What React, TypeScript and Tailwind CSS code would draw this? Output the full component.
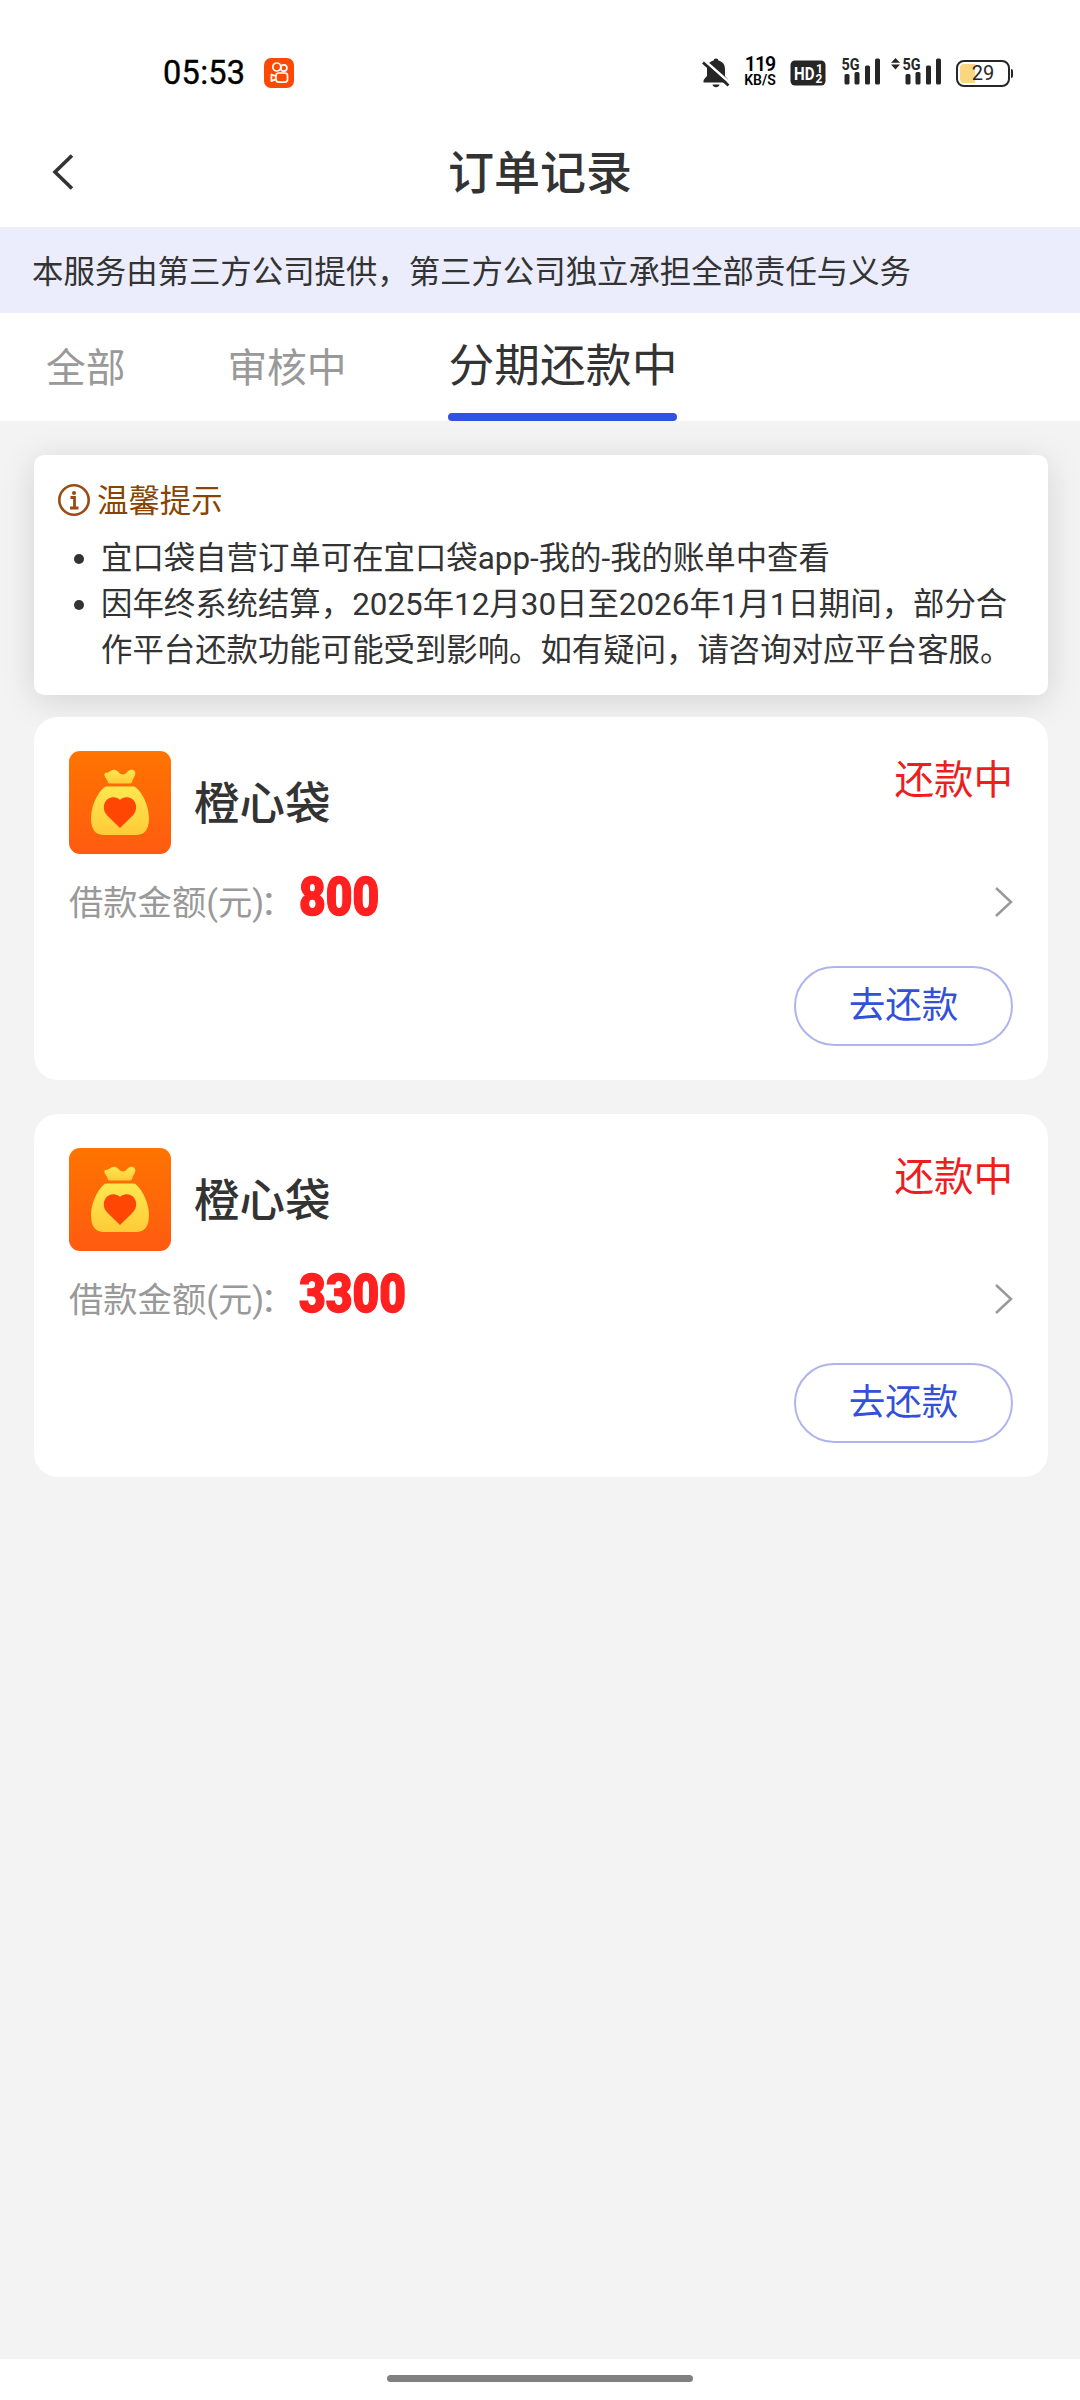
import React from 'react';

interface Order {
  id: number;
  name: string;
  status: string;
  amount: string;
}

const TABS = ['全部', '审核中', '分期还款中'];

const NOTICES = [
  '宜口袋自营订单可在宜口袋app-我的-我的账单中查看',
  '因年终系统结算，2025年12月30日至2026年1月1日期间，部分合作平台还款功能可能受到影响。如有疑问，请咨询对应平台客服。',
];

const ORDERS: Order[] = [
  { id: 1, name: '橙心袋', status: '还款中', amount: '800' },
  { id: 2, name: '橙心袋', status: '还款中', amount: '3300' },
];

const Signal: React.FC<{ arrows?: boolean }> = ({ arrows }) => (
  <svg
    className="overflow-visible"
    width={arrows ? 51 : 40}
    height="28"
    viewBox={arrows ? '-11 0 51 28' : '0 0 40 28'}
    fill="#262626"
  >
    {arrows && <path d="M-6.500 1l4.500 4.800h-9zM-6.500 12.400l4.500-4.800h-9z" />}
    <text x="0.500" y="13" fontSize="17" fontWeight="700" textLength="18" lengthAdjust="spacingAndGlyphs">5G</text>
    <rect x="3.500" y="17" width="5" height="10.500" rx="1.500" />
    <rect x="13.500" y="15" width="5" height="12.500" rx="1.500" />
    <rect x="24" y="8.500" width="5" height="19" rx="1.500" />
    <rect x="34" y="1.500" width="5" height="26" rx="1.500" />
  </svg>
);

const StatusBar: React.FC = () => (
  <div className="flex h-[146px] items-center pl-[163px] pr-[67px]">
    <span className="w-[101px] text-[32.500px] leading-none tracking-[0.3px] text-black [-webkit-text-stroke:0.4px_#000]">
      05:53
    </span>
    <svg width="30" height="30" viewBox="0 0 30 30" fill="none">
      <rect width="30" height="30" rx="7" fill="#fe4906" />
      <g stroke="#fff" strokeWidth="1.700">
        <circle cx="12.800" cy="9" r="4" />
        <circle cx="19.800" cy="10" r="3.100" />
        <rect x="12" y="15" width="11.500" height="9.200" rx="2.600" />
        <path d="M12 18.300l-4.600-1.800v6.600l4.600-2" strokeLinejoin="round" />
      </g>
    </svg>

    <div className="ml-auto flex items-center">
      <svg width="28" height="30" viewBox="0 0 28 30">
        <path
          d="M14 .5c1.500 0 2.200.8 2.400 2 4.300 1.100 6.600 4 6.600 8.500v6.500c0 1.500 3.500 3.300 3.500 5.500v1.500H1.500V23c0-2.200 3.500-4 3.500-5.500V11c0-4.500 2.300-7.400 6.600-8.500.2-1.200.9-2 2.400-2zM10.500 26.500h7c-.4 1.700-1.700 2.700-3.500 2.700s-3.100-1-3.500-2.700z"
          fill="#262626"
        />
        <path d="M2.500 2.500L28 25" stroke="#fff" strokeWidth="2.600" />
        <path d="M1 4.500L26.500 27.500" stroke="#262626" strokeWidth="2.800" />
      </svg>
      <div className="mb-[2px] ml-[12px] flex w-[36px] flex-col items-center font-semibold text-black">
        <span className="text-[19.500px] leading-[16px] tracking-[-1px]">119</span>
        <span className="whitespace-nowrap text-[14px] leading-[15px]">KB/S</span>
      </div>
      <svg className="ml-[12px]" width="36" height="26" viewBox="0 0 36 26" fontWeight="700">
        <rect x="0.500" y="0.500" width="35" height="25" rx="4.500" fill="#262626" />
        <text x="4" y="19.500" fontSize="18.500" fill="#fff" textLength="20.500" lengthAdjust="spacingAndGlyphs">HD</text>
        <text x="26" y="12.500" fontSize="12" fill="#fff">1</text>
        <text x="25.500" y="22.500" fontSize="12" fill="#fff">2</text>
      </svg>
      <div className="mb-[5px] ml-[15px] flex gap-[10px]">
        <Signal />
        <Signal arrows />
      </div>
      <div className="ml-[14px] flex items-center gap-px">
        <div className="relative flex h-[27px] w-[54px] items-center justify-center rounded-[8px] border-2 border-[#262626]">
          <div className="absolute left-[2px] top-[2px] h-[19px] w-[15px] rounded-l-[4px] bg-[#fbd682]" />
          <span className="relative text-[20px] leading-none text-[#262626]">29</span>
        </div>
        <div className="h-[9px] w-[2px] rounded-r bg-[#262626]" />
      </div>
    </div>
  </div>
);

const BagLogo: React.FC = () => (
  <svg className="shrink-0" width="102" height="103" viewBox="0 0 102 103">
    <defs>
      <linearGradient id="tile" x1="0" y1="0" x2="0" y2="1">
        <stop offset="0" stopColor="#ff7400" />
        <stop offset="1" stopColor="#ff5b10" />
      </linearGradient>
      <linearGradient id="bag" x1="0" y1="0" x2="0" y2="1">
        <stop offset="0" stopColor="#ffe850" />
        <stop offset="1" stopColor="#ffcb38" />
      </linearGradient>
    </defs>
    <rect width="102" height="103" rx="11" fill="url(#tile)" />
    <path
      d="M35.500 24.500c-.6-1.800.5-3 2.300-2.800 2.500.2 3.700-2.900 7.200-2.900 4 0 5 4.700 9 4.700s4.300-4.700 8.500-4.700c3 0 4.300 2.200 3.700 5-.5 2.300-2.300 3.600-2.800 6.200-.2 1.500-.8 2.500-2.100 2.500H40.500c-1.300 0-1.600-.8-1.900-2.200-.5-2.200-2.500-3.600-3.100-5.800z"
      fill="url(#bag)"
    />
    <path
      d="M37.500 35.500h27c1 0 1.800.3 2.500 1C74.500 43 80 56 80 67.500 80 78.500 75.500 84 67 84H35c-8.500 0-13-5.500-13-16.500C22 56 27.500 43 35 36.500c.7-.7 1.500-1 2.500-1z"
      fill="url(#bag)"
    />
    <path
      d="M51 49c3-3.500 8.700-3.500 12.200-.9 5 3.800 5.300 11.600.8 16.100L51 77 38 64.200c-4.500-4.500-4.200-12.300.8-16.100 3.500-2.600 9.200-2.600 12.200.9z"
      fill="#ff4603"
    />
  </svg>
);

const OrderCard: React.FC<{ order: Order }> = ({ order }) => (
  <div className="flex h-[363px] flex-col rounded-[24px] bg-white px-[35px] py-[34px]">
    <div className="flex h-[103px]">
      <BagLogo />
      <span className="ml-[23px] text-[45.500px] font-medium leading-[108px]">{order.name}</span>
      <span className="ml-auto text-[39.500px] leading-[59px] text-[#ec1f1f]">{order.status}</span>
    </div>
    <div className="mt-[18px] flex h-[60px] items-center">
      <span className="mt-[3px] w-[230px] whitespace-nowrap text-[34.300px] text-[#999]">
        借款金额(元)<span className="-ml-[4px]">：</span>
      </span>
      <span className="mb-[11px] origin-left scale-x-[0.87] text-[53px] font-black leading-[50px] text-[#ff2020] [-webkit-text-stroke:1.500px_#ff2020]">
        {order.amount}
      </span>
      <svg className="ml-auto" width="20" height="32" viewBox="0 0 20 32" fill="none">
        <path d="M3 2l15 14L3 30" stroke="#999" strokeWidth="2.500" />
      </svg>
    </div>
    <button className="mt-[34px] h-[80px] w-[219px] self-end rounded-full border-2 border-[#afb5ec] text-[36.600px] leading-none text-[#3350d8]">
      去还款
    </button>
  </div>
);

export default function App() {
  return (
    <div className="flex h-[2400px] w-[1080px] flex-col overflow-hidden bg-[#f3f3f3] font-[Roboto,'Noto_Sans_CJK_SC',sans-serif] text-[#333]">
      <header className="relative z-10 bg-white">
        <StatusBar />
        <div className="grid h-[81px] grid-cols-[1fr_auto_1fr] items-center pb-[28px]">
          <svg className="mb-[2px] ml-[50px]" width="26" height="38" viewBox="0 0 26 38" fill="none">
            <path d="M22 2.500L5 19l17 16.500" stroke="#333" strokeWidth="3.600" />
          </svg>
          <h1 className="text-[46px] font-medium leading-[54px]">订单记录</h1>
        </div>
        <div className="h-[86px] bg-[#ebedfc] pl-[32px] text-[31.400px] leading-[91px]">
          本服务由第三方公司提供，第三方公司独立承担全部责任与义务
        </div>
        <nav className="flex h-[108px] gap-[102px] pl-[46px]">
          {TABS.map((tab, i) =>
            i === 2 ? (
              <div key={tab} className="flex flex-col text-[45.800px]">
                <span className="h-[100px] leading-[108px]">{tab}</span>
                <span className="h-[8px] rounded-full bg-[#3350e4]" />
              </div>
            ) : (
              <div key={tab} className="text-[39.700px] leading-[111px] text-[#999]">
                {tab}
              </div>
            )
          )}
        </nav>
      </header>

      <main className="flex-1 pl-[34px] pr-[32px] pt-[34px]">
        <section className="h-[240px] rounded-[10px] bg-white px-[24px] pt-[22px] text-[31.400px] leading-[46px] shadow-[0_6px_35px_rgba(0,0,0,0.13)]">
          <div className="flex items-center gap-[7px] text-[#884400]">
            <svg width="32" height="32" viewBox="0 0 32 32" fill="none" stroke="#9c4a14">
              <circle cx="16" cy="16" r="14.700" strokeWidth="2.600" />
              <path d="M12.500 13.500h4v10M12 24h8.500" strokeWidth="2.800" />
              <circle cx="16" cy="9" r="2" fill="#9c4a14" stroke="none" />
            </svg>
            <span className="mt-[3px] h-[43px] leading-[44px]">温馨提示</span>
          </div>
          <ul className="mt-[13px]">
            {NOTICES.map((text) => (
              <li key={text} className="flex">
                <span className="ml-[16px] mr-[17px] mt-[18px] h-[10px] w-[10px] shrink-0 rounded-full bg-[#333]" />
                <span className="w-[915px]">{text}</span>
              </li>
            ))}
          </ul>
        </section>

        <div className="mt-[22px] flex flex-col gap-[34px]">
          {ORDERS.map((order) => (
            <OrderCard key={order.id} order={order} />
          ))}
        </div>
      </main>

      <footer className="flex h-[41px] justify-center bg-white pt-[16px]">
        <div className="h-[7px] w-[306px] rounded-full bg-[#808080]" />
      </footer>
    </div>
  );
}
